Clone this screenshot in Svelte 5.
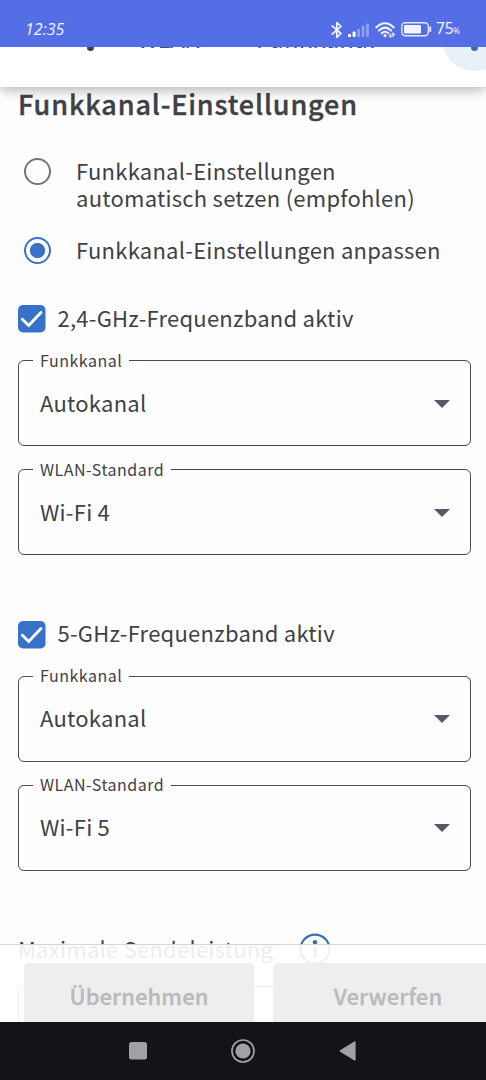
<script lang="ts">
  type Field = { label: string; value: string };
  type Band = { name: string; active: boolean; fields: Field[] };

  let mode = $state('custom');

  let bands: Band[] = $state([
    {
      name: '2,4-GHz-Frequenzband aktiv',
      active: true,
      fields: [
        { label: 'Funkkanal', value: 'Autokanal' },
        { label: 'WLAN-Standard', value: 'Wi-Fi 4' }
      ]
    },
    {
      name: '5-GHz-Frequenzband aktiv',
      active: true,
      fields: [
        { label: 'Funkkanal', value: 'Autokanal' },
        { label: 'WLAN-Standard', value: 'Wi-Fi 5' }
      ]
    }
  ]);
</script>

<div class="screen">
  <div class="status-bar">
    <span class="clock">12:35</span>
    <div class="status-icons">
      <svg class="bluetooth" width="12" height="18" viewBox="0 0 12 18">
        <path d="M1.3 5 L10 12.5 L5.8 16.4 V1.6 L10 5.3 L1.3 13" fill="none" stroke="#eef1ff" stroke-width="1.7" stroke-linejoin="round" stroke-linecap="round" />
      </svg>
      <svg class="signal" width="21" height="14" viewBox="0 0 21 14">
        <rect x="0" y="11" width="3" height="3" rx="0.8" fill="#fff" />
        <rect x="4.6" y="8.6" width="3" height="5.4" rx="0.8" fill="#fff" />
        <rect x="9.2" y="5.8" width="2.8" height="8.2" rx="0.8" fill="#8f9ff2" />
        <rect x="13.7" y="3" width="2.8" height="11" rx="0.8" fill="#8f9ff2" />
        <rect x="18.1" y="0.4" width="2.8" height="13.6" rx="0.8" fill="#8f9ff2" />
      </svg>
      <svg class="wifi" width="21" height="16" viewBox="0 0 21 16">
        <g fill="none" stroke="#f2f4ff" stroke-width="2" stroke-linecap="round">
          <path d="M1.2 5.4 Q10 -2.8 18.8 5.4" />
          <path d="M3.9 8.5 Q10 2.8 16.1 8.5" />
          <path d="M6.6 11.3 Q10 8.2 13.4 11.3" />
        </g>
        <circle cx="10" cy="13.6" r="1.6" fill="#f2f4ff" />
        <path d="M15.8 11.4 V15 L14 13.4 M18 15 V11.4 L19.8 13" fill="none" stroke="#f2f4ff" stroke-width="1.2" />
      </svg>
      <svg class="battery" width="32" height="15" viewBox="0 0 32 15">
        <rect x="0.8" y="0.8" width="26.6" height="12.9" rx="3.6" fill="none" stroke="#e6eaff" stroke-width="1.4" />
        <rect x="3" y="3" width="17" height="8.5" rx="1.2" fill="#f2f4ff" />
        <path d="M29.3 5.3 V9.2" stroke="#e6eaff" stroke-width="1.8" stroke-linecap="round" />
      </svg>
      <span class="percent">75<small>%</small></span>
    </div>
  </div>

  <header class="app-header">
    <span class="menu-dot"></span>
    <span class="crumb wlan">WLAN</span>
    <span class="crumb">Funkkanal</span>
    <span class="help"><span class="help-dot"></span></span>
  </header>

  <main>
    <h1>Funkkanal-Einstellungen</h1>

    <label class="radio-row">
      <input type="radio" bind:group={mode} value="auto" />
      <span>Funkkanal-Einstellungen<br />automatisch setzen (empfohlen)</span>
    </label>
    <label class="radio-row">
      <input type="radio" bind:group={mode} value="custom" />
      <span>Funkkanal-Einstellungen anpassen</span>
    </label>

    {#each bands as band}
      <section class="band">
        <label class="check-row">
          <input type="checkbox" bind:checked={band.active} />
          <svg class:off={!band.active} width="28" height="28" viewBox="0 0 28 28">
            <rect width="27.5" height="27.5" rx="5" fill="#3772c8" />
            <path d="M4.3 14.3 L10.7 20.5 L23 7.6" fill="none" stroke="#fff" stroke-width="2.9" stroke-linecap="round" />
          </svg>
          <span>{band.name}</span>
        </label>
        {#each band.fields as field}
          <fieldset>
            <legend>{field.label}</legend>
            <div class="value">
              <span>{field.value}</span>
              <svg width="16" height="8" viewBox="0 0 16 8"><path d="M0 0 H16 L8 8 Z" fill="#555a66" /></svg>
            </div>
          </fieldset>
        {/each}
      </section>
    {/each}

    <div class="power-row">
      <span>Maximale Sendeleistung</span>
      <svg width="32" height="32" viewBox="0 0 32 32">
        <circle cx="16" cy="16" r="14.4" fill="none" stroke="#3a6db8" stroke-width="2.2" />
        <circle cx="16" cy="9.2" r="2.3" fill="#3a6db8" />
        <path d="M16 14.2 V24.5" stroke="#3a6db8" stroke-width="3.4" />
      </svg>
    </div>
    <div class="power-box"></div>

    <div class="actions">
      <button disabled>Übernehmen</button>
      <button disabled>Verwerfen</button>
    </div>
  </main>

  <nav>
    <svg width="18" height="18" viewBox="0 0 18 18"><rect width="18" height="17.5" rx="2.5" fill="#a0a1a4" /></svg>
    <svg width="24" height="24" viewBox="0 0 24 24">
      <circle cx="12" cy="12" r="11" fill="none" stroke="#a0a1a4" stroke-width="1.7" />
      <circle cx="12" cy="12" r="7.6" fill="#a0a1a4" />
    </svg>
    <svg width="18" height="20" viewBox="0 0 18 20"><path d="M1.5 10 L15.8 1.2 V18.8 Z" fill="#a0a1a4" stroke="#a0a1a4" stroke-width="1.6" stroke-linejoin="round" /></svg>
  </nav>
</div>

<style>
  :global(body) {
    background: #fff;
  }

  .screen {
    display: flex;
    flex-direction: column;
    width: 486px;
    height: 1080px;
    overflow: hidden;
    background: #fefefe;
    color: #3f4147;
    font-family: 'Noto Sans CJK SC', 'Noto Sans', sans-serif;
    font-size: 22px;
    letter-spacing: 0.25px;
  }

  .status-bar {
    flex: none;
    display: flex;
    justify-content: space-between;
    box-sizing: border-box;
    height: 47px;
    padding: 12px 26px 0 25px;
    background: #546ee5;
    color: #f2f4ff;
    line-height: 35px;
    z-index: 2;
  }

  .clock {
    font: italic 16px/35px 'Open Sans', sans-serif;
    letter-spacing: 0;
  }

  .status-icons {
    display: flex;
    align-items: center;
    height: 35px;
  }

  .signal {
    margin-left: 5px;
  }

  .wifi {
    margin-left: 6px;
  }

  .battery {
    margin-left: 5px;
  }

  .percent {
    margin-left: 3px;
    font: 15.5px/35px 'Noto Sans', sans-serif;
    letter-spacing: -0.2px;
  }

  .percent small {
    font-size: 8px;
    letter-spacing: 0;
  }

  .app-header {
    flex: none;
    position: relative;
    display: flex;
    height: 40px;
    padding-left: 87px;
    background: #fff;
    box-shadow: 0 3px 12px rgba(0, 0, 0, 0.3);
    z-index: 1;
  }

  .menu-dot {
    width: 7px;
    height: 7px;
    margin: -3px 43px 0 0;
    border-radius: 50%;
    background: #3f4147;
  }

  .crumb {
    margin-top: -25px;
    height: 30px;
    font-size: 24px;
    line-height: 32px;
    color: #43506f;
  }

  .wlan {
    width: 119px;
    letter-spacing: -0.5px;
  }

  .help {
    position: absolute;
    top: -41px;
    right: -21px;
    width: 65px;
    height: 65px;
    border-radius: 50%;
    background: #e8f1f8;
  }

  .help-dot {
    position: absolute;
    left: 29px;
    top: 38px;
    width: 7px;
    height: 7px;
    border-radius: 50%;
    background: #3a6db8;
  }

  main {
    flex: 1;
    position: relative;
    padding: 0 15px 0 18px;
    overflow: hidden;
  }

  h1 {
    margin: 0;
    font-size: 27px;
    font-weight: 500;
    line-height: 34px;
    letter-spacing: 0.85px;
    -webkit-text-stroke: 0.4px currentColor;
  }

  .radio-row {
    display: flex;
    margin-top: 35.5px;
    padding-left: 6px;
    gap: 25px;
    line-height: 27.5px;
  }

  .radio-row + .radio-row {
    margin-top: 24px;
  }

  .radio-row input {
    appearance: none;
    flex: none;
    width: 27px;
    height: 27px;
    margin: 1px 0 0;
    border: 2px solid #757575;
    border-radius: 50%;
  }

  .radio-row input:checked {
    border-color: #3772c8;
    background: radial-gradient(circle, #3772c8 7.2px, transparent 7.9px);
  }

  .band {
    height: 315.5px;
  }

  .radio-row + .band {
    margin-top: 41px;
  }

  .check-row {
    display: flex;
    align-items: center;
    gap: 11.5px;
    height: 29px;
    margin-bottom: 16px;
  }

  .check-row span {
    padding-bottom: 4px;
    line-height: 27px;
  }

  .check-row input {
    display: none;
  }

  .check-row .off {
    opacity: 0.3;
  }

  fieldset {
    box-sizing: border-box;
    height: 96.5px;
    margin: 0 0 12.5px;
    padding: 0 20px 0 14px;
    border: 1.5px solid #4a4b50;
    border-radius: 6px;
  }

  legend {
    padding: 0 6.5px 1px 7px;
    font-size: 16px;
    line-height: 21px;
    letter-spacing: 0.5px;
  }

  .value {
    display: flex;
    align-items: center;
    justify-content: space-between;
    height: 64px;
    padding-left: 7px;
  }

  .value span {
    padding-bottom: 4px;
  }

  .power-row {
    display: flex;
    align-items: center;
    height: 32px;
    margin-top: -3px;
    gap: 26px;
  }

  .power-row span {
    padding-bottom: 1px;
  }

  .power-box {
    height: 80px;
    margin-top: 21px;
    border: 1.5px solid #4a4b50;
    border-radius: 6px;
  }

  .actions {
    position: absolute;
    left: 0;
    bottom: 0;
    display: flex;
    gap: 19px;
    box-sizing: border-box;
    width: 100%;
    height: 78px;
    padding: 18px 0 0 24px;
    border-top: 1px solid #d5d5d6;
    background: rgba(255, 255, 255, 0.9);
    overflow: hidden;
  }

  button {
    flex: none;
    width: 230px;
    height: 68px;
    padding: 0 0 4px;
    border: 0;
    border-radius: 5px;
    background: #eee;
    color: #b9babc;
    font: inherit;
    font-size: 22px;
    font-weight: 500;
    letter-spacing: 0.1px;
    -webkit-text-stroke: 0.3px currentColor;
  }

  nav {
    flex: none;
    display: flex;
    align-items: center;
    justify-content: center;
    gap: 84px;
    height: 58px;
    background: #131418;
  }
</style>
